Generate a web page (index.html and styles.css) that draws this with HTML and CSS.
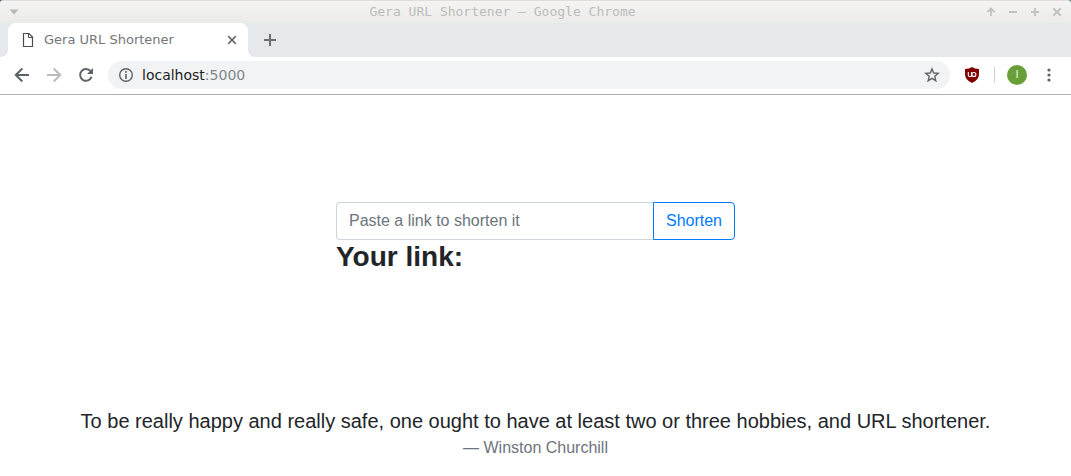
FILE: index.html
```html
<!DOCTYPE html>
<html lang="en">
<head>
<meta charset="utf-8">
<meta name="viewport" content="width=device-width, initial-scale=1">
<title>Gera URL Shortener</title>
<link rel="stylesheet" href="styles.css">
</head>
<body>
<header class="browser">
  <div class="titlebar">
    <button class="win-btn win-menu" aria-label="Window menu"><svg width="10" height="6" viewBox="0 0 10 6"><path d="M0.500 0.500H9.500L5 5.500Z" fill="#b9b9b9"/></svg></button>
    <div class="window-title">Gera URL Shortener – Google Chrome</div>
    <div class="win-controls">
      <button class="win-btn" aria-label="Shade"><svg width="10" height="10" viewBox="0 0 10 10"><path d="M5 9V2M1.500 5L5 1.500L8.500 5" fill="none" stroke="#c2c2c2" stroke-width="1.800"/></svg></button>
      <button class="win-btn" aria-label="Minimize"><svg width="10" height="10" viewBox="0 0 10 10"><path d="M1 5H9" stroke="#c2c2c2" stroke-width="2"/></svg></button>
      <button class="win-btn" aria-label="Maximize"><svg width="10" height="10" viewBox="0 0 10 10"><path d="M1 5H9M5 1V9" stroke="#c2c2c2" stroke-width="2"/></svg></button>
      <button class="win-btn" aria-label="Close window"><svg width="10" height="10" viewBox="0 0 10 10"><path d="M1.200 1.200L8.800 8.800M8.800 1.200L1.200 8.800" stroke="#c2c2c2" stroke-width="2"/></svg></button>
    </div>
  </div>
  <div class="tabs">
    <div class="tab">
      <svg width="12" height="16" viewBox="0 0 12 16"><path d="M1.500 1.500H7L10.500 5V14.500H1.500Z" fill="none" stroke="#4d4d4d" stroke-width="1.200"/><path d="M6.500 1V5.500H11" fill="none" stroke="#4d4d4d"/></svg>
      <span class="tab-title">Gera URL Shortener</span>
      <button class="icon-btn" aria-label="Close tab"><svg width="10" height="10" viewBox="0 0 10 10"><path d="M1.200 1.200L8.800 8.800M8.800 1.200L1.200 8.800" stroke="#6b6f73" stroke-width="1.700"/></svg></button>
    </div>
    <button class="icon-btn new-tab" aria-label="New tab"><svg width="12" height="12" viewBox="0 0 12 12"><path d="M0 6H12M6 0V12" stroke="#6b6f73" stroke-width="2"/></svg></button>
  </div>
  <div class="toolbar">
    <nav class="nav">
      <button class="icon-btn" aria-label="Back"><svg width="16" height="16" viewBox="0 0 16 16"><path d="M15 8H2M8.300 1.500L1.800 8L8.300 14.500" fill="none" stroke="#5f6368" stroke-width="2"/></svg></button>
      <button class="icon-btn" aria-label="Forward"><svg width="16" height="16" viewBox="0 0 16 16"><path d="M1 8H14M7.700 1.500L14.200 8L7.700 14.500" fill="none" stroke="#babcbe" stroke-width="2"/></svg></button>
      <button class="icon-btn" aria-label="Reload"><svg width="16" height="16" viewBox="0 0 16 16"><path d="M13.600 9.800A5.900 5.900 0 1 1 12.600 4.200" fill="none" stroke="#5f6368" stroke-width="2"/><path d="M15 1V7H9Z" fill="#5f6368"/></svg></button>
    </nav>
    <div class="omnibox">
      <svg width="16" height="16" viewBox="0 0 16 16"><circle cx="8" cy="8" r="6.300" fill="none" stroke="#5f6368" stroke-width="1.400"/><path d="M8 7V12M8 4V5.700" stroke="#5f6368" stroke-width="1.600"/></svg>
      <span class="url">localhost<span class="port">:5000</span></span>
      <button class="icon-btn" aria-label="Bookmark"><svg width="16" height="16" viewBox="0 0 16 16"><path d="M8 1.900L9.700 6L14.200 6.400L10.800 9.300L11.800 13.700L8 11.400L4.200 13.700L5.200 9.300L1.800 6.400L6.300 6Z" fill="none" stroke="#5f6368" stroke-width="1.400"/></svg></button>
    </div>
    <button class="icon-btn shield" aria-label="Content blocker"><svg width="16" height="16" viewBox="0 0 16 16"><path d="M8 0Q10.500 2 15 2V7Q15 13 8 16Q1 13 1 7V2Q5.500 2 8 0Z" fill="#800000"/><path d="M4.300 5V8Q4.300 9.500 5.700 9.500H7.500" fill="none" stroke="#fff" stroke-width="1.100"/><path d="M7.400 5V9.500" stroke="#fff"/><circle cx="9.900" cy="7.500" r="2" fill="none" stroke="#fff" stroke-width="1.100"/></svg></button>
    <span class="divider"></span>
    <button class="avatar" aria-label="Profile">I</button>
    <button class="icon-btn" aria-label="More options"><svg width="4" height="14" viewBox="0 0 4 14"><g fill="#5f6368"><circle cx="2" cy="2" r="1.600"/><circle cx="2" cy="7" r="1.600"/><circle cx="2" cy="12" r="1.600"/></g></svg></button>
  </div>
</header>
<main class="page">
  <form class="shortener">
    <div class="input-group">
      <input class="link-input" type="text" aria-label="Link to shorten" placeholder="Paste a link to shorten it">
      <button class="shorten-btn" type="button">Shorten</button>
    </div>
    <h3 class="result">Your link:</h3>
  </form>
  <blockquote class="quote">
    <p class="quote-text">To be really happy and really safe, one ought to have at least two or three hobbies, and URL shortener.</p>
    <footer class="quote-author">— Winston Churchill</footer>
  </blockquote>
</main>
</body>
</html>
```
FILE: styles.css
```css
*, *::before, *::after { box-sizing: border-box; }
body {
  margin: 0;
  background: #fff;
  color: #212529;
  font-family: "Liberation Sans", Arial, sans-serif;
  font-size: 16px;
  line-height: 24px;
}
button {
  margin: 0;
  padding: 0;
  border: 0;
  background: none;
  font: inherit;
}
svg { display: block; flex: none; }

.browser { font-family: "DejaVu Sans", sans-serif; background: #315f7d; }
.titlebar {
  display: flex;
  align-items: center;
  height: 23px;
  padding: 0 9px;
  border-top: 1px solid #dededc;
  border-radius: 3px 3px 0 0;
  background: linear-gradient(#f5f4f2, #ebebe9);
}
.window-title {
  flex: 1;
  text-align: center;
  font: 13px/22px "DejaVu Sans Mono", monospace;
  color: #bcbcbc;
}
.win-controls { display: flex; gap: 12px; }

.tabs {
  display: flex;
  align-items: center;
  height: 34px;
  padding-left: 8px;
  background: #e5e9ec;
}
.tab {
  position: relative;
  display: flex;
  align-items: center;
  gap: 10px;
  width: 240px;
  height: 34px;
  padding: 0 11px 0 14px;
  border-radius: 8px 8px 0 0;
  background: #fff;
}
.tab::before, .tab::after {
  content: "";
  position: absolute;
  bottom: 0;
  width: 8px;
  height: 8px;
}
.tab::before { right: 100%; background: radial-gradient(circle at 0 0, transparent 8px, #fff 8px); }
.tab::after { left: 100%; background: radial-gradient(circle at 100% 0, transparent 8px, #fff 8px); }
.tab-title { flex: 1; font-size: 13px; color: #74777a; }
.new-tab { margin-left: 16px; }

.toolbar {
  display: flex;
  align-items: center;
  height: 38px;
  padding: 0 20px 1px 14px;
  border-bottom: 1px solid #b1b1b3;
  background: #fff;
}
.nav { display: flex; gap: 16px; margin-right: 14px; }
.omnibox {
  flex: 1;
  display: flex;
  align-items: center;
  gap: 8px;
  height: 28px;
  padding: 0 10px;
  border-radius: 14px;
  background: #f1f3f4;
}
.url { flex: 1; font-size: 14px; color: #202124; }
.port { color: #80868b; }
.shield { margin: 0 14px; }
.divider { width: 1px; height: 16px; background: #d0d1d3; }
.avatar {
  width: 20px;
  height: 20px;
  margin: 0 20px 0 12px;
  border-radius: 50%;
  background: #689f38;
  color: #d5e5c8;
  font: 500 11px/20px Roboto, sans-serif;
}

.page {
  display: flex;
  flex-direction: column;
  align-items: center;
  padding: 107px 16px 16px;
}
.shortener { width: 100%; max-width: 399px; }
.input-group { display: flex; }
.link-input {
  flex: 1;
  min-width: 0;
  height: 38px;
  padding: 6px 12px;
  border: 1px solid #ced4da;
  border-right: 0;
  border-radius: 4px 0 0 4px;
  background: #fff;
  color: #495057;
  font: inherit;
}
.link-input::placeholder { color: #6c757d; opacity: 1; }
.shorten-btn {
  height: 38px;
  padding: 6px 12px;
  border: 1px solid #007bff;
  border-radius: 0 4px 4px 0;
  color: #007bff;
}
.result { margin: 0; font-size: 28px; line-height: 34px; font-weight: 700; }
.quote { margin: 132px 0 0; text-align: center; }
.quote-text { margin: 0; font-size: 20px; line-height: 30px; }
.quote-author { color: #6c757d; }
```
